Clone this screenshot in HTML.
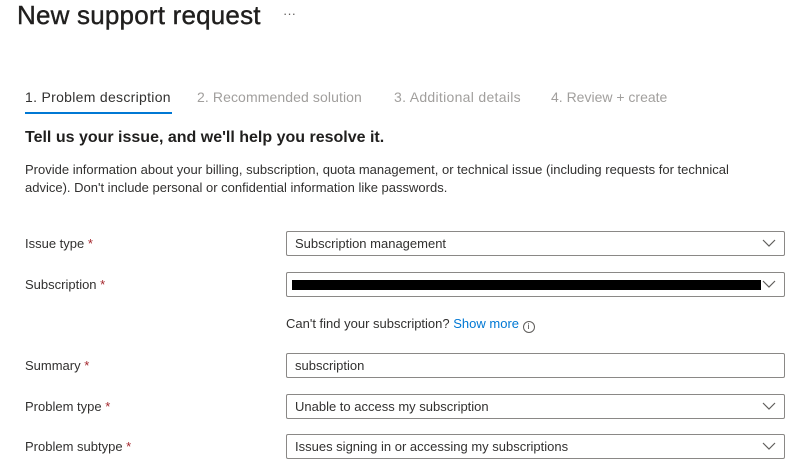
<!DOCTYPE html>
<html><head><style>
body{margin:0;width:794px;height:466px;background:#fff;font-family:"Liberation Sans",sans-serif;color:#323130;position:relative;overflow:hidden}
.a{position:absolute;white-space:nowrap}
.box{position:absolute;left:286px;width:497px;height:23px;border:1px solid #8a8886;border-radius:2px;font-size:13px;line-height:23px;box-sizing:content-box}
.box span{position:absolute;left:8px}
.chev{position:absolute;right:8px;top:7px;width:14px;height:8px}
.lbl{position:absolute;left:25px;font-size:13px}
.lbl b{color:#a4262c;font-weight:normal}
</style></head><body>
<div class="a" style="left:17px;top:0px;font-size:26px;color:#201f1e;-webkit-text-stroke:0.4px #201f1e;letter-spacing:0.2px">New support request</div>
<div class="a" style="left:283px;top:6px;font-size:13px;color:#605e5c">···</div>
<div class="a" style="left:25px;top:89px;font-size:14px;color:#323130;letter-spacing:0.3px">1. Problem description</div>
<div class="a" style="left:25px;top:112px;width:147px;height:2px;background:#0078d4"></div>
<div class="a" style="left:197px;top:89px;font-size:14px;color:#a19f9d;letter-spacing:0.1px">2. Recommended solution</div>
<div class="a" style="left:394px;top:89px;font-size:14px;color:#a19f9d;letter-spacing:0.3px">3. Additional details</div>
<div class="a" style="left:551px;top:89px;font-size:14px;color:#a19f9d">4. Review + create</div>
<div class="a" style="left:25px;top:129px;font-size:16px;font-weight:bold;color:#201f1e">Tell us your issue, and we'll help you resolve it.</div>
<div class="a" style="left:25px;top:161px;font-size:13px;line-height:18px">Provide information about your billing, subscription, quota management, or technical issue (including requests for technical<br>advice). Don't include personal or confidential information like passwords.</div>

<div class="lbl" style="top:236px">Issue type <b>*</b></div>
<div class="box" style="top:231px"><span>Subscription management</span><svg class="chev" viewBox="0 0 14 8"><path d="M1 1L7 7L13 1" fill="none" stroke="#605e5c" stroke-width="1.2"/></svg></div>

<div class="lbl" style="top:277px">Subscription <b>*</b></div>
<div class="box" style="top:272px"><div style="position:absolute;left:5px;top:7px;width:469px;height:10px;background:#000"></div><svg class="chev" viewBox="0 0 14 8"><path d="M1 1L7 7L13 1" fill="none" stroke="#605e5c" stroke-width="1.2"/></svg></div>

<div class="a" style="left:286px;top:316px;font-size:13px">Can't find your subscription? <span style="color:#0078d4">Show more</span> <span style="display:inline-block;width:10px;height:10px;border:1px solid #605e5c;border-radius:50%;font-size:8px;line-height:10px;text-align:center;vertical-align:-1px">i</span></div>

<div class="lbl" style="top:358px">Summary <b>*</b></div>
<div class="box" style="top:353px"><span>subscription</span></div>

<div class="lbl" style="top:399px">Problem type <b>*</b></div>
<div class="box" style="top:394px"><span>Unable to access my subscription</span><svg class="chev" viewBox="0 0 14 8"><path d="M1 1L7 7L13 1" fill="none" stroke="#605e5c" stroke-width="1.2"/></svg></div>

<div class="lbl" style="top:439px">Problem subtype <b>*</b></div>
<div class="box" style="top:434px"><span>Issues signing in or accessing my subscriptions</span><svg class="chev" viewBox="0 0 14 8"><path d="M1 1L7 7L13 1" fill="none" stroke="#605e5c" stroke-width="1.2"/></svg></div>
</body></html>
